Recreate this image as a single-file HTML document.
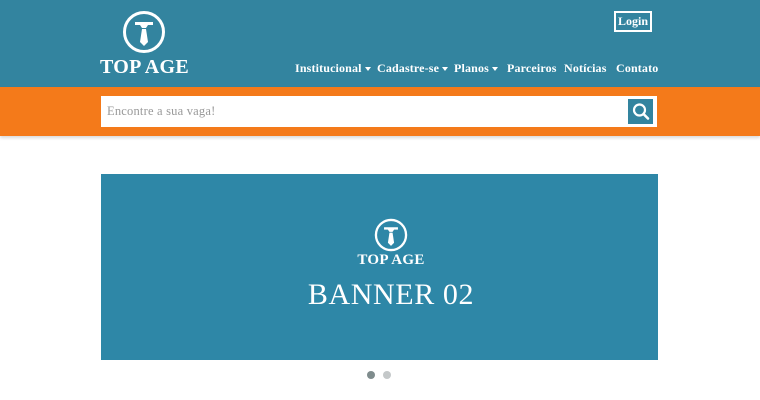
<!DOCTYPE html>
<html><head><meta charset="utf-8"><style>
*{margin:0;padding:0;box-sizing:border-box}
body{width:760px;height:400px;background:#fff;font-family:"Liberation Serif",serif;position:relative;overflow:hidden}
.hdr{position:absolute;left:0;top:0;width:760px;height:87px;background:#33849f}
.org{position:absolute;left:0;top:87px;width:760px;height:49px;background:#f47a1a;box-shadow:0 2px 3px rgba(0,0,0,.15)}
.search{position:absolute;left:101px;top:96px;width:556px;height:31px;background:#fff}
.search span{position:absolute;left:6px;top:8px;font-size:12.5px;color:#999;letter-spacing:.2px}
.sbtn{position:absolute;right:4px;top:3px;width:25px;height:25px;background:#33849f}
.logo{position:absolute;left:100px;top:56px;color:#fff;font-weight:bold;font-size:20px;letter-spacing:.3px}
.nav{position:absolute;top:61px;color:#fff;font-weight:bold;font-size:12px;white-space:nowrap;letter-spacing:.15px}
.login{position:absolute;left:614px;top:11px;width:38px;height:21px;border:2px solid #fff;color:#fff;font-weight:bold;font-size:12px;text-align:center;line-height:17px}
.banner{position:absolute;left:101px;top:174px;width:557px;height:186px;background:#2e87a7;color:#fff}
.c{position:absolute;left:190px;width:200px;text-align:center}
.dot{position:absolute;top:371px;width:8px;height:8px;border-radius:50%}
.car{display:inline-block;width:0;height:0;border-left:3.5px solid transparent;border-right:3.5px solid transparent;border-top:4px solid #fff;vertical-align:middle;margin-left:3px}
</style></head><body>
<div class="hdr"></div>
<svg style="position:absolute;left:122px;top:10px" width="44" height="44" viewBox="0 0 44 44">
<circle cx="22" cy="22" r="19.5" fill="none" stroke="#fff" stroke-width="3"/>
<path d="M13 12 L31 12 L31 15 L26 15 L24 18 L20 18 L18 15 L13 15Z" fill="#fff"/>
<path d="M20 19 L24 19 L26 32 L22 36 L18 32Z" fill="#fff"/>
</svg>
<div class="logo">TOP AGE</div>
<div class="login">Login</div>
<div class="nav" style="left:295px">Institucional<span class="car"></span></div>
<div class="nav" style="left:377px">Cadastre-se<span class="car"></span></div>
<div class="nav" style="left:454px">Planos<span class="car"></span></div>
<div class="nav" style="left:507px">Parceiros</div>
<div class="nav" style="left:564px">Notícias</div>
<div class="nav" style="left:616px">Contato</div>
<div class="org"></div>
<div class="search"><span>Encontre a sua vaga!</span>
<div class="sbtn"><svg width="25" height="25" viewBox="0 0 25 25"><circle cx="11.5" cy="11" r="5.5" fill="none" stroke="#fff" stroke-width="2.2"/><path d="M15.5 15 L20 19.5" stroke="#fff" stroke-width="2.6" stroke-linecap="round"/></svg></div></div>
<div class="banner">
<svg style="position:absolute;left:273px;top:44px" width="34" height="34" viewBox="0 0 44 44">
<circle cx="22" cy="22" r="19.5" fill="none" stroke="#fff" stroke-width="3"/>
<path d="M13 12 L31 12 L31 15 L26 15 L24 18 L20 18 L18 15 L13 15Z" fill="#fff"/>
<path d="M20 19 L24 19 L26 32 L22 36 L18 32Z" fill="#fff"/>
</svg>
<div class="c" style="top:78px;font-weight:bold;font-size:15px;letter-spacing:.3px">TOP AGE</div>
<div class="c" style="top:104px;font-size:30px;letter-spacing:.6px">BANNER 02</div>
</div>
<div class="dot" style="left:367px;background:#7f8c8d"></div>
<div class="dot" style="left:383px;background:#c4c8c9"></div>
</body></html>
